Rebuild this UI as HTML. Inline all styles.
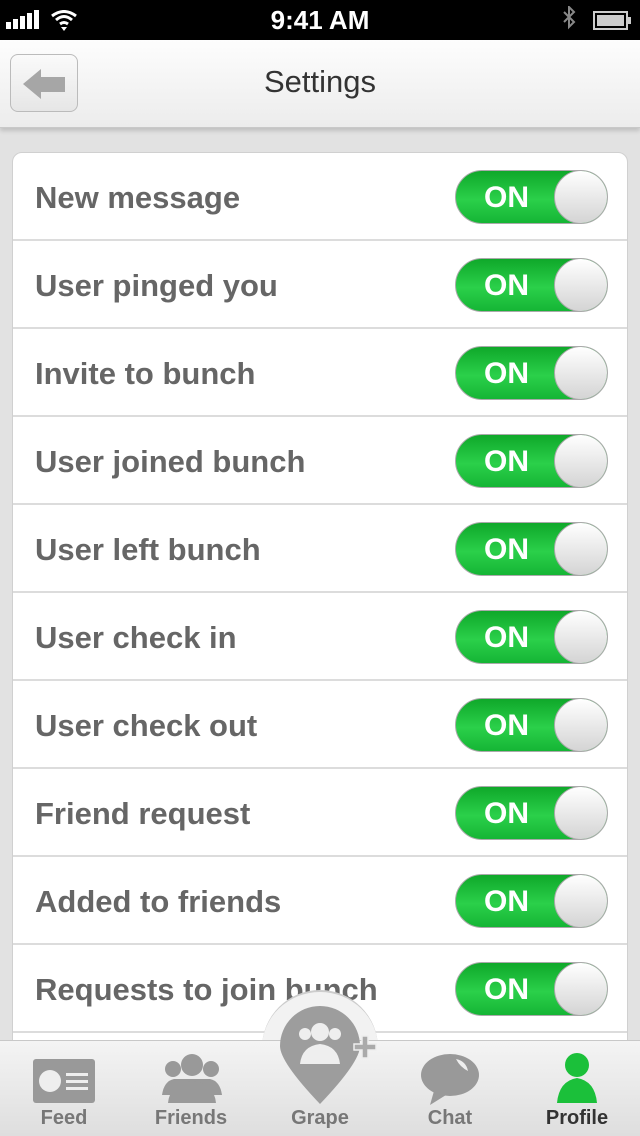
<!DOCTYPE html>
<html><head><meta charset="utf-8"><style>
*{margin:0;padding:0;box-sizing:border-box}
body{width:640px;height:1136px;overflow:hidden;background:#e2e2e2;font-family:"Liberation Sans",sans-serif;position:relative}
.sb{position:absolute;top:0;left:0;width:640px;height:40px;background:#000;color:#fff}
.sb .t{position:absolute;left:0;right:0;top:5px;text-align:center;font-size:26px;font-weight:bold}
.nav{position:absolute;top:40px;left:0;width:640px;height:88px;background:linear-gradient(#fdfdfd,#ececec);border-bottom:1px solid #c8c8c8;box-shadow:0 3px 4px rgba(0,0,0,.15)}
.nav h1{position:absolute;left:0;right:0;top:24px;text-align:center;font-weight:normal;font-size:31px;color:#333}
.back{position:absolute;left:10px;top:14px;width:68px;height:58px;border:1px solid #bbb;border-radius:8px;background:linear-gradient(#fafafa,#e6e6e6)}
.card{position:absolute;left:12px;top:152px;width:616px;height:900px;background:#fff;border-radius:10px;border:1px solid #d0d0d0}
.row{height:88px;border-bottom:2px solid #dcdcdc;position:relative}
.row span{position:absolute;left:22px;top:27px;font-size:31px;font-weight:bold;color:#666}
.tg{position:absolute;left:442px;top:17px;width:153px;height:54px;border-radius:27px;border:1px solid #aaa;background:linear-gradient(#0fa82a,#2bd04a 55%,#15b535);overflow:hidden}
.tg b{position:absolute;left:28px;top:10px;color:#fff;font-size:30px}
.tg i{position:absolute;right:-1px;top:-1px;width:54px;height:54px;border-radius:50%;background:linear-gradient(#fff,#d4d4d4);border:1px solid #aaa}
.tab{position:absolute;left:0;top:1040px;width:640px;height:96px;background:linear-gradient(#f4f4f4,#dedede);border-top:1px solid #c8c8c8}
.tab .l{position:absolute;top:66px;font-size:20px;font-weight:bold;color:#777;width:120px;text-align:center}
.bump{position:absolute;left:262px;top:990px;width:116px;height:116px;border-radius:50%;background:#f2f2f2;border-top:2px solid #ccc}
</style></head><body>
<div class="sb">
<svg style="position:absolute;left:6px;top:10px" width="80" height="22"><rect x="0" y="12" width="5" height="7" fill="#fff"/><rect x="7" y="9" width="5" height="10" fill="#fff"/><rect x="14" y="6" width="5" height="13" fill="#fff"/><rect x="21" y="3" width="5" height="16" fill="#fff"/><rect x="28" y="0" width="5" height="19" fill="#fff"/><path d="M46 6 Q58 -3 70 6 M50 10 Q58 3 66 10 M54 14 Q58 11 62 14" stroke="#fff" stroke-width="3" fill="none"/><path d="M55 17 L58 21 L61 17Z" fill="#fff"/></svg>
<div class="t">9:41 AM</div>
<svg style="position:absolute;left:558px;top:6px" width="78" height="30"><path d="M6 6 L16 16 L11 21 L11 1 L16 6 L6 16" stroke="#888" stroke-width="2" fill="none"/><rect x="36" y="6" width="33" height="17" stroke="#ccc" stroke-width="2" fill="none"/><rect x="39" y="9" width="27" height="11" fill="#ccc"/><rect x="70" y="11" width="3" height="7" fill="#ccc"/></svg>
</div>
<div class="nav"><div class="back"><svg width="68" height="58"><path d="M12 29 L30 14 L30 22 L54 22 L54 37 L30 37 L30 44Z" fill="#a6a6a6"/></svg></div><h1>Settings</h1></div>
<div class="card">
<div class="row"><span>New message</span><div class="tg"><b>ON</b><i></i></div></div>
<div class="row"><span>User pinged you</span><div class="tg"><b>ON</b><i></i></div></div>
<div class="row"><span>Invite to bunch</span><div class="tg"><b>ON</b><i></i></div></div>
<div class="row"><span>User joined bunch</span><div class="tg"><b>ON</b><i></i></div></div>
<div class="row"><span>User left bunch</span><div class="tg"><b>ON</b><i></i></div></div>
<div class="row"><span>User check in</span><div class="tg"><b>ON</b><i></i></div></div>
<div class="row"><span>User check out</span><div class="tg"><b>ON</b><i></i></div></div>
<div class="row"><span>Friend request</span><div class="tg"><b>ON</b><i></i></div></div>
<div class="row"><span>Added to friends</span><div class="tg"><b>ON</b><i></i></div></div>
<div class="row"><span>Requests to join bunch</span><div class="tg"><b>ON</b><i></i></div></div>
</div>
<div class="bump"></div>
<div class="tab">
<svg style="position:absolute;left:32px;top:16px" width="64" height="56"><rect x="1" y="2" width="62" height="44" rx="3" fill="#999"/><circle cx="18" cy="24" r="11" fill="#eee"/><rect x="34" y="16" width="22" height="3" fill="#eee"/><rect x="34" y="23" width="22" height="3" fill="#eee"/><rect x="34" y="30" width="22" height="3" fill="#eee"/></svg>
<svg style="position:absolute;left:160px;top:10px" width="64" height="56"><circle cx="13" cy="18" r="8" fill="#999"/><circle cx="51" cy="18" r="8" fill="#999"/><circle cx="32" cy="14" r="11" fill="#999"/><path d="M2 44 Q4 30 14 28 L50 28 Q60 30 62 44 Z" fill="#999"/><path d="M8 52 Q10 32 32 30 Q54 32 56 52Z" fill="#999"/></svg>
<svg style="position:absolute;left:418px;top:10px" width="64" height="56"><ellipse cx="32" cy="24" rx="29" ry="21" fill="#999"/><path d="M16 40 L12 54 L28 44Z" fill="#999"/><path d="M38 8 Q48 10 50 20 Q42 16 38 8Z" fill="#eee"/></svg>
<svg style="position:absolute;left:555px;top:10px" width="44" height="54"><circle cx="22" cy="14" r="12" fill="#1bc03a"/><path d="M2 52 Q4 30 22 27 Q40 30 42 52Z" fill="#1bc03a"/></svg>
<div class="l" style="left:4px">Feed</div>
<div class="l" style="left:131px">Friends</div>
<div class="l" style="left:260px">Grape</div>
<div class="l" style="left:390px">Chat</div>
<div class="l" style="left:517px;color:#333">Profile</div>
</div>
<svg style="position:absolute;left:276px;top:1004px" width="104" height="110"><path d="M44 100 Q4 58 4 42 A40 40 0 0 1 84 42 Q84 58 44 100Z" fill="#9d9d9d"/><circle cx="29" cy="30" r="6" fill="#eee"/><circle cx="59" cy="30" r="6" fill="#eee"/><circle cx="44" cy="28" r="9" fill="#eee"/><path d="M24 60 Q26 42 44 40 Q62 42 64 60Z" fill="#eee"/><path d="M78 40 h8 v-8 h6 v8 h8 v6 h-8 v8 h-6 v-8 h-8Z" fill="#aaa" stroke="#eee" stroke-width="1.5"/></svg>
</body></html>
